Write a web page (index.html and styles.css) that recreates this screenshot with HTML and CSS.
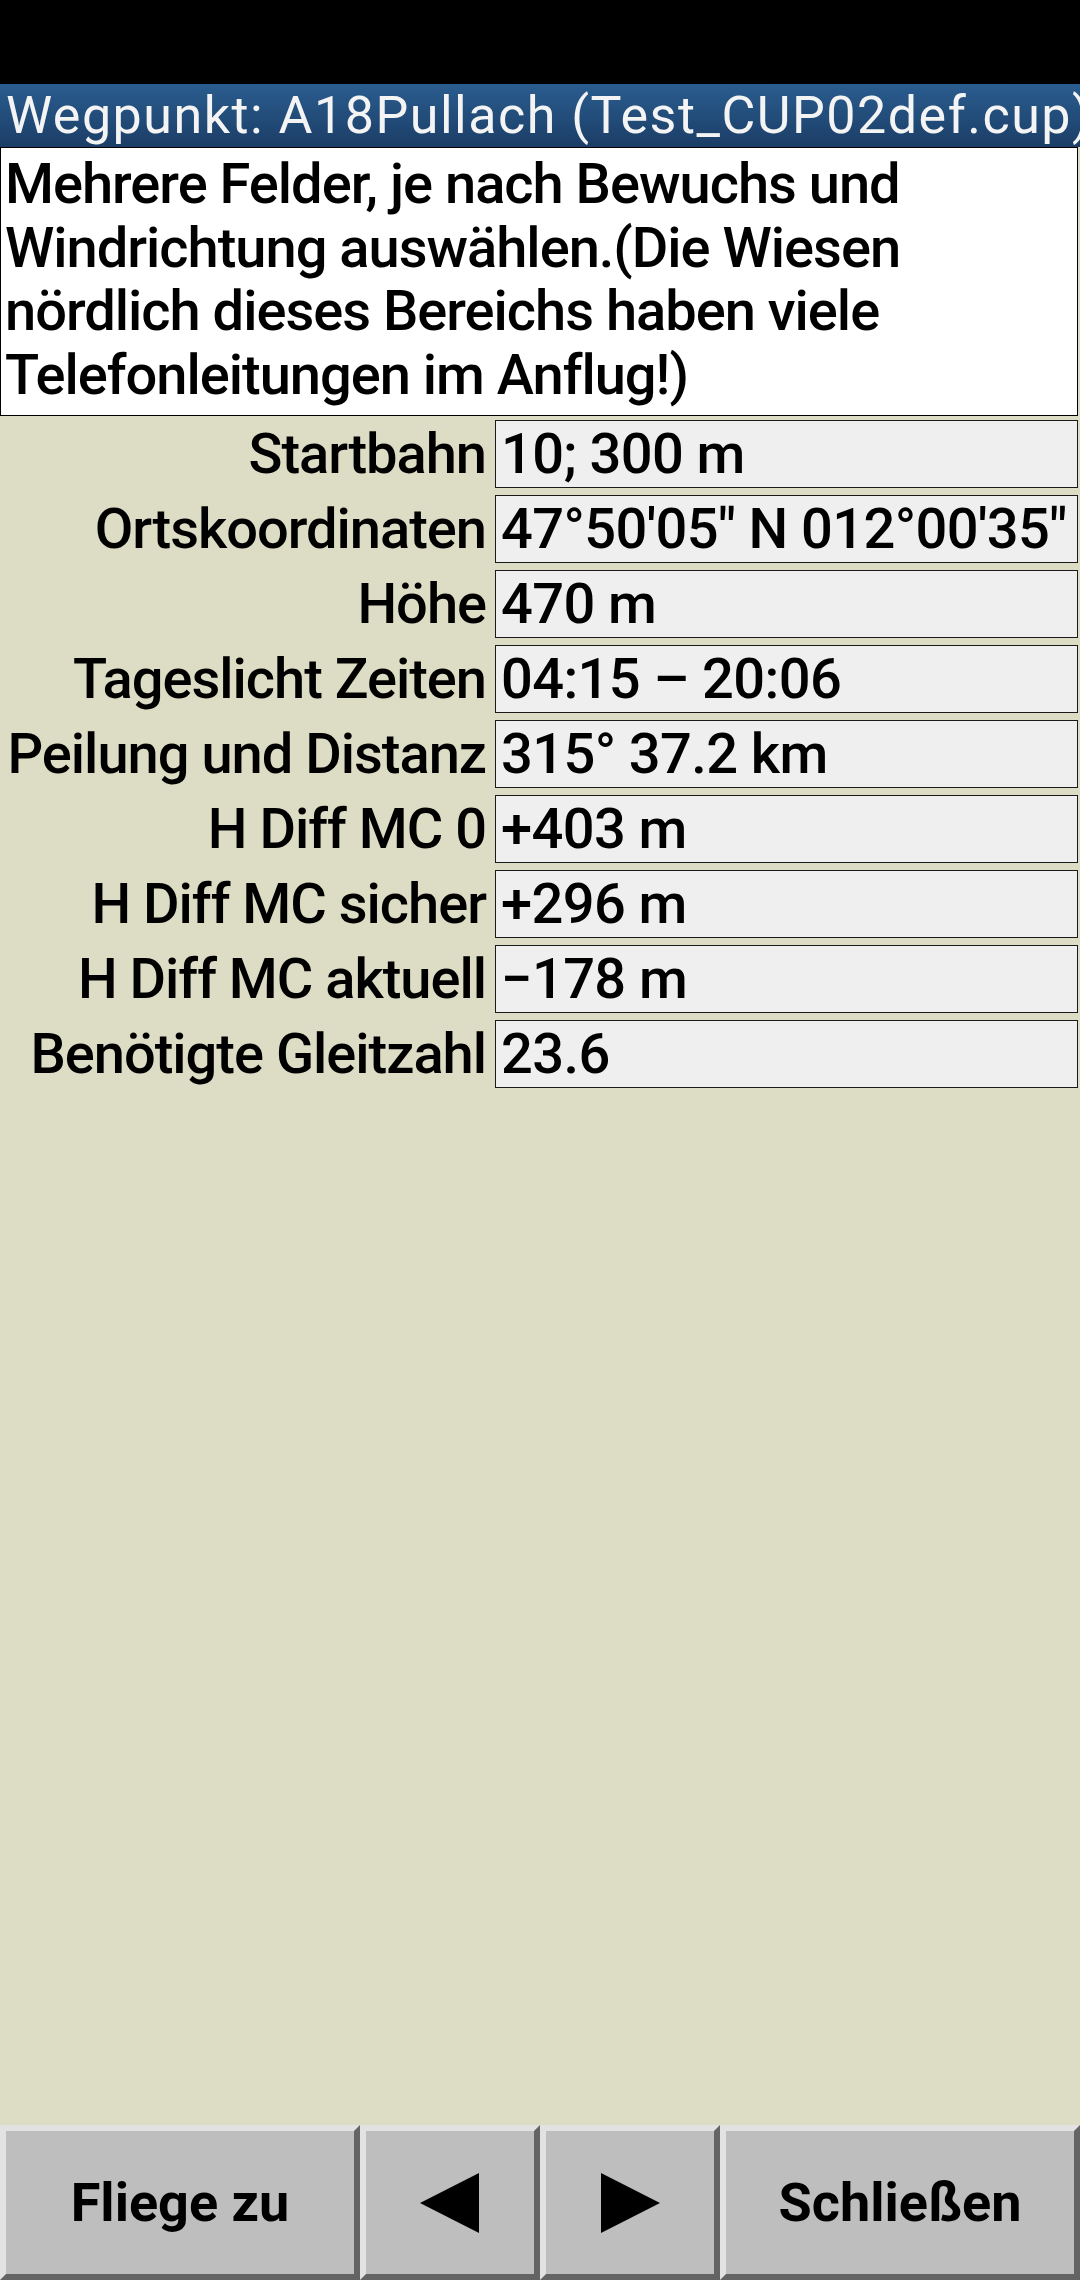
FILE: index.html
```html
<!DOCTYPE html>
<html lang="de">
<head>
<meta charset="utf-8">
<title>Wegpunkt</title>
<link rel="stylesheet" href="styles.css">
</head>
<body>
<div class="screen">
  <div class="statusbar"></div>
  <div class="titlebar"><span class="title">Wegpunkt: A18Pullach (Test_CUP02def.cup)</span></div>
  <div class="comment">Mehrere Felder, je nach Bewuchs und Windrichtung auswählen.(Die Wiesen nördlich dieses Bereichs haben viele Telefonleitungen im Anflug!)</div>
  <div class="details">
    <div class="label">Startbahn</div><div class="value">10; 300 m</div>
    <div class="label">Ortskoordinaten</div><div class="value">47°50'05" N 012°00'35"</div>
    <div class="label">Höhe</div><div class="value">470 m</div>
    <div class="label">Tageslicht Zeiten</div><div class="value">04:15 – 20:06</div>
    <div class="label">Peilung und Distanz</div><div class="value">315° 37.2 km</div>
    <div class="label">H Diff MC 0</div><div class="value">+403 m</div>
    <div class="label">H Diff MC sicher</div><div class="value">+296 m</div>
    <div class="label">H Diff MC aktuell</div><div class="value">−178 m</div>
    <div class="label">Benötigte Gleitzahl</div><div class="value">23.6</div>
  </div>
  <div class="spacer"></div>
  <div class="buttons">
    <div class="btn wide">Fliege zu</div>
    <div class="btn narrow"><svg class="arrow" width="60" height="60" viewBox="0 0 60 60"><polygon points="0,30 59,0 59,60" fill="#000"/></svg></div>
    <div class="btn narrow"><svg class="arrow" width="60" height="60" viewBox="0 0 60 60"><polygon points="1,0 60,30 1,60" fill="#000"/></svg></div>
    <div class="btn wide">Schließen</div>
  </div>
</div>
</body>
</html>
```
FILE: styles.css
```css
html, body {
  margin: 0;
  padding: 0;
}
body {
  width: 1080px;
  height: 2280px;
  overflow: hidden;
  background: #dddcc4;
  font-family: Roboto, "Noto Sans", sans-serif;
  color: #000;
}
.screen {
  display: flex;
  flex-direction: column;
  height: 2280px;
}
.statusbar {
  flex: none;
  height: 84px;
  background: #000;
}
.titlebar {
  flex: none;
  height: 63px;
  background: linear-gradient(#2a5d8f, #1b3d66);
  color: #f4f4f4;
  font-size: 52px;
  line-height: 63px;
  letter-spacing: 1.5px;
  white-space: nowrap;
  overflow: hidden;
  padding-left: 6px;
}
.comment {
  flex: none;
  width: 1078px;
  box-sizing: border-box;
  border: 1px solid #000;
  background: #fff;
  padding: 5px 4px 8px;
  font-size: 56px;
  font-weight: 500;
  line-height: 63.5px;
  letter-spacing: -1px;
}
.details {
  flex: none;
  display: grid;
  grid-template-columns: 486px 583px;
  grid-auto-rows: 68px;
  column-gap: 9px;
  row-gap: 7px;
  margin-top: 4px;
}
.label {
  text-align: right;
  font-size: 56px;
  font-weight: 500;
  line-height: 68px;
  letter-spacing: -1px;
  white-space: nowrap;
}
.value {
  box-sizing: border-box;
  border: 1px solid #1a1a1a;
  background: #efefef;
  padding-left: 5px;
  font-size: 56px;
  font-weight: 500;
  line-height: 66px;
  letter-spacing: -0.6px;
  white-space: nowrap;
  overflow: hidden;
}
.spacer {
  flex: 1;
}
.buttons {
  flex: none;
  display: flex;
  height: 155px;
}
.btn {
  box-sizing: border-box;
  height: 155px;
  border: 6px solid;
  border-color: #e2e2e2 #646464 #646464 #e2e2e2;
  background: #bebebe;
  display: flex;
  align-items: center;
  justify-content: center;
  font-size: 54px;
  font-weight: 700;
}
.btn.wide {
  width: 360px;
}
.btn.narrow {
  width: 180px;
}
.arrow {
  display: block;
}
```
